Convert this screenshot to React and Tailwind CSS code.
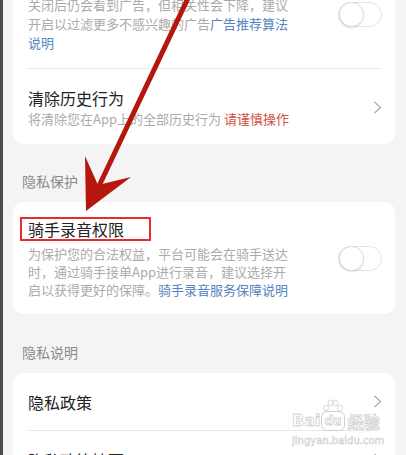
const font = "font-['Noto_Sans_CJK_SC','Noto_Sans',sans-serif]";

const Toggle = ({ className = '' }) => (
    <div className={`relative w-[44px] h-[25px] rounded-full bg-white border border-[#e3e3e3] shrink-0 ${className}`}>
        <div className="absolute left-0 top-[-1px] w-[25px] h-[25px] rounded-full bg-white border border-[#dcdcdc] shadow-[0_1px_2px_rgba(0,0,0,0.12)]" />
    </div>
);

const Chevron = () => (
    <svg width="9" height="13" viewBox="0 0 9 13" className="shrink-0">
        <path d="M1.5 1 L7.5 6.5 L1.5 12" fill="none" stroke="#a9a9a9" strokeWidth="1.2" />
    </svg>
);

const Divider = () => <div className="h-px bg-[#e8e8e8] mx-[15px]" />;

const SectionLabel = ({ children, className = '' }) => (
    <div className={`pl-[9px] text-[14px] leading-[20px] text-[#8a8a8a] ${className}`}>{children}</div>
);

const Watermark = () => (
    <div className="absolute left-[289px] top-[398px] pointer-events-none select-none">
        <svg width="22" height="16" viewBox="0 0 22 16" className="absolute left-[30px] top-[1px]">
            <g fill="none" stroke="#d4d4d4" strokeWidth="0.9">
                <ellipse cx="4" cy="9" rx="2.4" ry="3" />
                <ellipse cx="8.5" cy="4" rx="2.4" ry="3" />
                <ellipse cx="13.5" cy="4" rx="2.4" ry="3" />
                <ellipse cx="18" cy="9" rx="2.4" ry="3" />
            </g>
        </svg>
        <div className="mt-[13px] flex items-center font-['DejaVu_Sans',sans-serif] font-bold text-[16px] leading-[18px] text-white [-webkit-text-stroke:0.8px_#d0d0d0]">
            <span>Bai</span>
            <span className="ml-[1px] px-[2px] text-[12px] rounded-[6px] border border-[#d0d0d0]">du</span>
            <span className={`ml-[3px] ${font}`}>经验</span>
        </div>
        <div className="mt-[4px] font-['DejaVu_Sans',sans-serif] text-[10px] leading-[12px] text-white [-webkit-text-stroke:0.6px_#d0d0d0]">
            jingyan.baidu.com
        </div>
    </div>
);

const Arrow = () => (
    <svg width="406" height="455" viewBox="0 0 406 455" className="absolute inset-0 pointer-events-none">
        <line x1="186" y1="-4" x2="96" y2="186" stroke="#b5160e" strokeWidth="5" />
        <polygon points="82,156 95,185 128,177 83,211" fill="#b5160e" />
    </svg>
);

export default function App() {
    return (
        <div className={`relative w-[406px] h-[455px] overflow-hidden bg-[#f4f4f4] border-l-[3px] border-[#4d4d4d] ${font}`}>
            <div className="pl-[10px] pr-[11px]">
                {/* top card, scrolled partly out of view */}
                <div className="bg-white rounded-b-[10px] overflow-hidden">
                    <div className="flex -mt-[5px] pl-[15px] pr-[13px]">
                        <p className="w-[262px] text-[13px] leading-[19px] text-[#ababab]">
                            关闭后仍会看到广告，但相关性会下降，建议开启以过滤更多不感兴趣的广告
                            <span className="text-[#5584c0]">广告推荐算法说明</span>
                        </p>
                        <Toggle className="ml-auto mt-[7px]" />
                    </div>
                    <div className="mt-[16px]">
                        <Divider />
                    </div>
                    <div className="flex items-center pl-[15px] pr-[13px] pt-[18px] pb-[16px]">
                        <div>
                            <div className="text-[16px] leading-[22px] text-[#222]">清除历史行为</div>
                            <div className="text-[13px] leading-[19px] text-[#ababab]">
                                将清除您在App上的全部历史行为 <span className="text-[#d4503f]">请谨慎操作</span>
                            </div>
                        </div>
                        <div className="ml-auto">
                            <Chevron />
                        </div>
                    </div>
                </div>

                <SectionLabel className="mt-[27px] mb-[11px]">隐私保护</SectionLabel>

                <div className="relative bg-white rounded-[10px] flex items-center pl-[15px] pr-[13px] pt-[16px] pb-[15px]">
                    <div>
                        <div className="text-[16px] leading-[23px] text-[#222]">骑手录音权限</div>
                        <p className="mt-[4px] w-[262px] text-[13px] leading-[18px] text-[#ababab]">
                            为保护您的合法权益，平台可能会在骑手送达时，通过骑手接单App进行录音，建议选择开启以获得更好的保障。
                            <span className="text-[#5584c0]">骑手录音服务保障说明</span>
                        </p>
                    </div>
                    <Toggle className="ml-auto" />
                    <div className="absolute left-[7px] top-[15px] w-[131px] h-[24px] border-2 border-[#ea2a2e]" />
                </div>

                <SectionLabel className="mt-[28px] mb-[11px]">隐私说明</SectionLabel>

                <div className="bg-white rounded-[10px]">
                    <div className="h-[57px] flex items-center pl-[15px] pr-[13px]">
                        <span className="text-[16px] text-[#222]">隐私政策</span>
                        <div className="ml-auto">
                            <Chevron />
                        </div>
                    </div>
                    <Divider />
                    <div className="h-[57px] flex items-center pl-[15px] pr-[13px]">
                        <span className="text-[16px] text-[#222]">隐私政策摘要</span>
                        <div className="ml-auto">
                            <Chevron />
                        </div>
                    </div>
                </div>
            </div>
            <Watermark />
            <Arrow />
        </div>
    );
}
